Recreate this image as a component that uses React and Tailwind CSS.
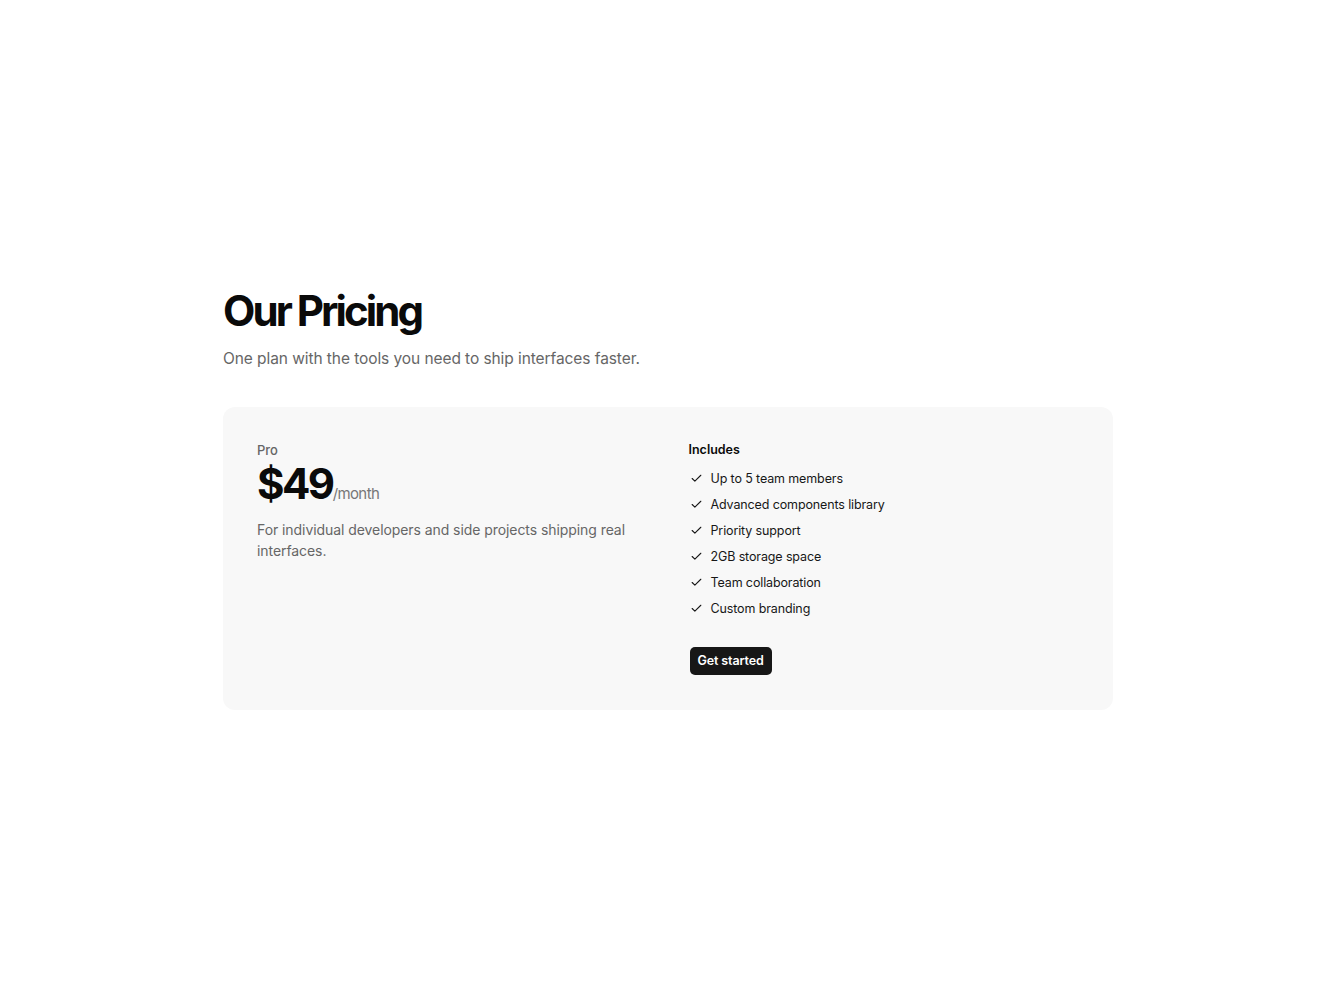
import { Check } from "lucide-react";

const features = [
    "Up to 5 team members",
    "Advanced components library",
    "Priority support",
    "2GB storage space",
    "Team collaboration",
    "Custom branding",
];

export default function App() {
    return (
        <div
            className="flex min-h-screen items-center justify-center bg-white text-[#0a0a0a]"
            style={{ fontFamily: "Inter, 'Noto Sans', sans-serif" }}
        >
            <div className="w-[890px] pb-1">
                {/* Heading */}
                <h1 className="text-[42px] font-bold leading-[46px] tracking-[-0.07em]">Our Pricing</h1>
                <p className="mt-[13px] text-[15.5px] leading-[23px] tracking-[-0.005em] text-[#666666]">
                    One plan with the tools you need to ship interfaces faster.
                </p>

                {/* Card */}
                <div className="mt-[37px] grid grid-cols-2 gap-[41px] rounded-xl bg-[#f8f8f8] px-[34px] pt-[34px] pb-[35px]">
                    <div>
                        <div className="text-[13px] font-medium text-[#666666]">Pro</div>
                        <div className="mt-0.5 flex items-baseline">
                            <span className="text-[42px] font-bold leading-none tracking-[-0.06em]">$49</span>
                            <span className="text-[15px] tracking-[-0.04em] text-[#777777]">/month</span>
                        </div>
                        <p className="mt-[14px] text-[14px] leading-[21px] tracking-[-0.005em] text-[#666666]">
                            For individual developers and side projects shipping real interfaces.
                        </p>
                    </div>

                    <div>
                        <div className="text-[12.5px] font-semibold">Includes</div>
                        <ul className="mt-[6px] flex flex-col">
                            {features.map((f) => (
                                <li key={f} className="flex h-[26px] items-center gap-2 text-[12.5px] tracking-[-0.01em] text-[#171717]">
                                    <Check size={13} strokeWidth={2} className="ml-px" />
                                    <span>{f}</span>
                                </li>
                            ))}
                        </ul>
                        <button className="mt-[25px] ml-px h-[28px] rounded-[5px] bg-[#171717] px-2 text-[12.5px] font-semibold tracking-[-0.01em] text-white">
                            Get started
                        </button>
                    </div>
                </div>
            </div>
        </div>
    );
}
